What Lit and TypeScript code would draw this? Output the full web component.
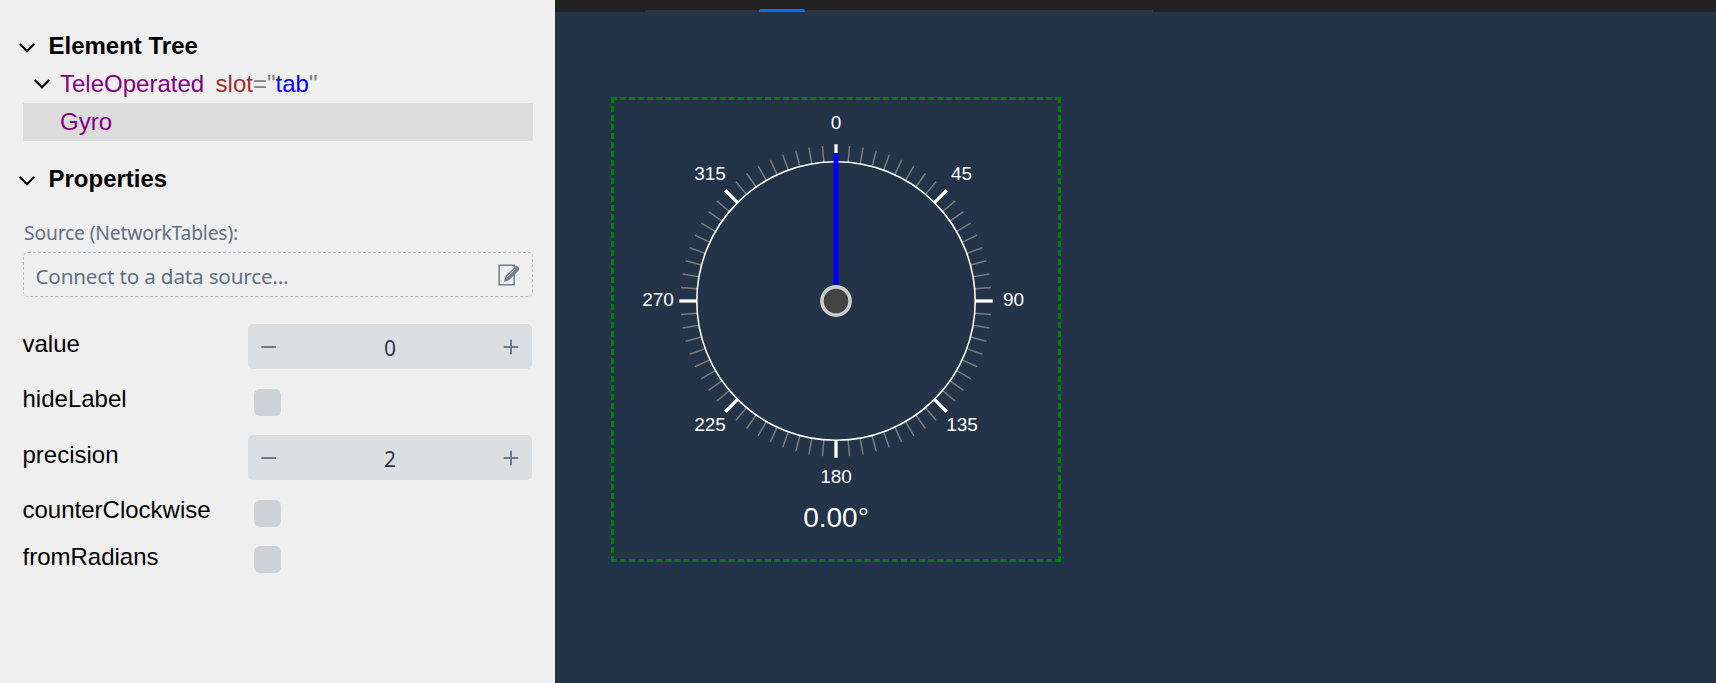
import { LitElement, html, svg, css } from "lit";
import { customElement, property } from "lit/decorators.js";

const CHEVRON = html`<svg class="chevron" width="16" height="10" viewBox="0 0 16 10">
  <path d="M.8 1 8 8.2 15.2 1" fill="none" stroke="#000" stroke-width="2.2" />
</svg>`;

@customElement("number-field")
class NumberField extends LitElement {
  @property({ type: Number }) value = 0;
  static styles = css`
    :host { display: flex; align-items: center; height: 45px; width: 284px; box-sizing: border-box;
      border-radius: 5px; background: #dadee1; padding: 0 13px; justify-content: space-between; }
    .num { font: 21px/45px "Noto Sans", sans-serif; color: #28384f; padding-top: 4px; }
  `;
  render() {
    return html`
      <svg width="16" height="16" viewBox="0 0 16 16"><path d="M.3 8h14.6" stroke="#6b788a" stroke-width="2" /></svg>
      <span class="num">${this.value}</span>
      <svg width="16" height="16" viewBox="0 0 16 16"><path d="M.8 8h14.4M8 .8v14.4" stroke="#6b788a" stroke-width="2" /></svg>
    `;
  }
}

@customElement("gyro-dial")
class GyroDial extends LitElement {
  @property({ type: Number }) value = 0;
  static styles = css`
    :host { display: block; }
    svg { display: block; }
    text { font-family: "Liberation Sans", Arial, sans-serif; fill: #fff; text-anchor: middle; }
    .label { font-size: 19px; }
    .reading { font-size: 28px; }
  `;
  render() {
    const labels: [string, number, number][] = [
      ["0", 222, 31.6], ["45", 347.5, 82.6], ["90", 399.5, 208.6], ["135", 348, 333.6],
      ["180", 222, 385.6], ["225", 96, 333.6], ["270", 44, 208.6], ["315", 96, 82.6],
    ];
    return html`<svg width="444" height="459" viewBox="0 3 444 459">
      ${Array.from({ length: 72 }, (_, i) => {
        const major = i % 9 === 0;
        return svg`<line x1="222" x2="222" y1=${major ? 47.3 : 48.3} y2="64.8"
          stroke=${major ? "#fff" : "#7c7c7c"} stroke-width=${major ? 3.3 : 1.5}
          transform="rotate(${i * 5} 222 204)" />`;
      })}
      <circle cx="222" cy="204" r="139.2" fill="none" stroke="#fff" stroke-width="1.6" />
      <line x1="222" x2="222" y1="56" y2="204" stroke="#00f" stroke-width="5"
        transform="rotate(${this.value} 222 204)" />
      <circle cx="222" cy="204" r="14.1" fill="#444" stroke="#ccc" stroke-width="3.6" />
      ${labels.map(([t, x, y]) => svg`<text class="label" x=${x} y=${y}>${t}</text>`)}
      <text class="reading" x="222" y="430">${this.value.toFixed(2)}°</text>
    </svg>`;
  }
}

@customElement("app-root")
class AppRoot extends LitElement {
  static styles = css`
    :host { display: flex; height: 683px; overflow: hidden; background: #233348;
      font-family: "Liberation Sans", Arial, sans-serif; font-size: 24px; color: #000; }
    .side { width: 555px; box-sizing: border-box; background: #efefef; padding: 26px 22px 0 18px; flex: none; }
    .head { display: flex; align-items: center; height: 40px; gap: 14px; font-weight: bold; }
    .chevron { display: block; flex: none; margin: 3px 0 0 .5px; }
    .row { display: flex; align-items: center; height: 38px; gap: 10.5px; }
    .node { padding-left: 15px; height: 35px; margin-bottom: 2px; }
    .node .chevron { margin-top: 0; }
    .sel { background: #dcdcdc; margin-left: 5px; padding-left: 37px; }
    .tag { color: #800080; }
    .attr { color: #a52a2a; margin-left: 1px; }
    .eq { color: #808080; }
    .val { color: #00f; }
    .props { margin-top: 18px; }
    .source { font: 19.3px/28px "Noto Sans", sans-serif; letter-spacing: -.18px; margin: 20px 0 5px 6px; }
    .source, .connect { color: #627082; }
    .connect { display: flex; align-items: center; justify-content: space-between; box-sizing: border-box;
      margin-left: 5px; height: 45px; border: 1px dashed #b5bdca; border-radius: 5px; padding: 3px 12px 0 11.5px;
      font: 20.7px/40px "Noto Sans", sans-serif; letter-spacing: -.2px; }
    .connect svg { display: block; margin-top: -3px; }
    .fields { display: grid; grid-template-columns: 225.5px 284px; margin: 27px 0 0 4.5px;
      grid-template-rows: 45px 66px 45px 66px 27px; }
    .name { line-height: 40px; }
    .short { align-self: center; margin-bottom: 6px; }
    .last { margin: -9px 0 -4px; }
    .box { width: 27px; height: 27px; border-radius: 6px; background: #ccd2d6; margin-left: 6px; align-self: center; }
    .main { flex: 1; }
    .bar { height: 12px; background: #222; display: flex; align-items: flex-end; padding-left: 90px; }
    .tabs { width: 508px; height: 2px; background: #333; display: flex; align-items: flex-end; }
    .active { margin-left: 114px; width: 46px; height: 3px; background: #0d6fe8; border-radius: 2px 2px 0 0; }
    .canvas { padding: 85px 0 0 56px; }
    .frame { width: 444px; height: 459px; border: 3px dashed #008000; }
  `;
  render() {
    const box = html`<span class="box"></span>`;
    return html`
      <div class="side">
        <div class="head">${CHEVRON}<span>Element Tree</span></div>
        <div class="row node">${CHEVRON}<span class="tag">TeleOperated</span
          ><span><span class="attr">slot</span><span class="eq">="</span><span class="val">tab</span><span class="eq">"</span></span></div>
        <div class="row sel"><span class="tag">Gyro</span></div>
        <div class="head props">${CHEVRON}<span>Properties</span></div>
        <div class="source">Source (NetworkTables):</div>
        <div class="connect"><span>Connect to a data source...</span>
          <svg width="22" height="22" viewBox="0 0 22 22">
            <path d="M16.2 3.2V1.2H1.2v19.6H16.2V10.5" fill="none" stroke="#727e8e" stroke-width="1.5" />
            <path d="M5.8 17.7 7.2 12.3 16.6 2.9q2-1.8 3.7 0t.4 3.7L11.3 16Z" fill="#727e8e" />
            <path d="m9.2 13 8-8" stroke="#dfe2e5" stroke-width="1" />
          </svg>
        </div>
        <div class="fields">
          <span class="name">value</span><number-field .value=${0}></number-field>
          <span class="name short">hideLabel</span>${box}
          <span class="name">precision</span><number-field .value=${2}></number-field>
          <span class="name short">counterClockwise</span>${box}
          <span class="name last">fromRadians</span>${box}
        </div>
      </div>
      <div class="main">
        <div class="bar"><div class="tabs"><div class="active"></div></div></div>
        <div class="canvas"><div class="frame"><gyro-dial .value=${0}></gyro-dial></div></div>
      </div>
    `;
  }
}
